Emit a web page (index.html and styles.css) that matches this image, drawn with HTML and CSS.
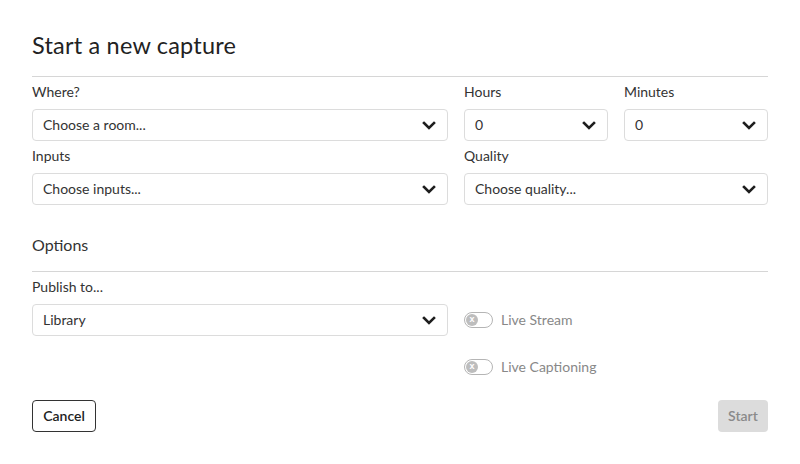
FILE: index.html
```html
<!DOCTYPE html>
<html>
<head>
<meta charset="utf-8">
<link rel="stylesheet" href="styles.css">
</head>
<body>
<div class="page">
  <h1 class="title">Start a new capture</h1>
  <div class="grid-top">
    <div class="field f-where">
      <label class="label">Where?</label>
      <div class="select"><span>Choose a room...</span><svg class="chev" viewBox="0 0 14 9"><path d="M2 2l5 5 5-5"/></svg></div>
    </div>
    <div class="field">
      <label class="label">Hours</label>
      <div class="select"><span>0</span><svg class="chev" viewBox="0 0 14 9"><path d="M2 2l5 5 5-5"/></svg></div>
    </div>
    <div class="field">
      <label class="label">Minutes</label>
      <div class="select"><span>0</span><svg class="chev" viewBox="0 0 14 9"><path d="M2 2l5 5 5-5"/></svg></div>
    </div>
    <div class="field f-where">
      <label class="label">Inputs</label>
      <div class="select"><span>Choose inputs...</span><svg class="chev" viewBox="0 0 14 9"><path d="M2 2l5 5 5-5"/></svg></div>
    </div>
    <div class="field f-quality">
      <label class="label">Quality</label>
      <div class="select"><span>Choose quality...</span><svg class="chev" viewBox="0 0 14 9"><path d="M2 2l5 5 5-5"/></svg></div>
    </div>
  </div>

  <h2 class="subtitle">Options</h2>
  <div class="grid-opts">
    <div class="field">
      <label class="label">Publish to...</label>
      <div class="select"><span>Library</span><svg class="chev" viewBox="0 0 14 9"><path d="M2 2l5 5 5-5"/></svg></div>
    </div>
    <div class="toggles">
      <div class="toggle-row"><span class="toggle"><span class="knob">x</span></span><span class="toggle-label">Live Stream</span></div>
      <div class="toggle-row"><span class="toggle"><span class="knob">x</span></span><span class="toggle-label">Live Captioning</span></div>
    </div>
  </div>

  <div class="actions">
    <button class="btn btn-cancel">Cancel</button>
    <button class="btn btn-start">Start</button>
  </div>
</div>
</body>
</html>
```

FILE: styles.css
```css
* { box-sizing: border-box; }
html, body { margin: 0; padding: 0; background: #fff; }
body {
  font-family: Lato, "Open Sans", "Liberation Sans", sans-serif;
  color: #333;
  font-size: 14px;
}
.page {
  width: 800px;
  padding: 30px 32px 0 32px;
}
.title {
  margin: 0;
  font-size: 23.5px;
  line-height: 30px;
  font-weight: 400;
  letter-spacing: 0.2px;
  color: #222;
  padding-bottom: 16px;
  border-bottom: 1px solid #d6d6d6;
}
.grid-top {
  display: grid;
  grid-template-columns: 416px 144px 144px;
  column-gap: 16px;
  row-gap: 5px;
  margin-top: 5px;
}
.f-quality { grid-column: 2 / 4; }
.field { display: flex; flex-direction: column; }
.label {
  display: block;
  line-height: 20px;
  margin-bottom: 7px;
  color: #333;
}
.select {
  height: 32px;
  border: 1px solid #dcdcdc;
  border-radius: 4px;
  display: flex;
  align-items: center;
  justify-content: space-between;
  padding: 0 11px 2px 10px;
  color: #333;
}
.chev {
  width: 14px;
  height: 9px;
  margin-top: 2px;
  fill: none;
  stroke: #1e1e1e;
  stroke-width: 2.6;
  stroke-linecap: square;
}
.subtitle {
  margin: 30px 0 0 0;
  font-size: 16px;
  line-height: 20px;
  font-weight: 400;
  color: #333;
  padding-bottom: 16px;
  border-bottom: 1px solid #d6d6d6;
}
.grid-opts {
  display: grid;
  grid-template-columns: 416px 1fr;
  column-gap: 16px;
  margin-top: 5px;
}
.toggles {
  padding-top: 27px;
  display: flex;
  flex-direction: column;
  gap: 15px;
}
.toggle-row {
  height: 32px;
  display: flex;
  align-items: center;
  gap: 8px;
  color: #888;
  padding-bottom: 2px;
}
.toggle {
  width: 29px;
  height: 16px;
  border: 1px solid #b5b5b5;
  border-radius: 8px;
  background: #fff;
  display: flex;
  align-items: center;
  padding-left: 1px;
  margin-top: 2px;
}
.knob {
  width: 12px;
  height: 12px;
  border-radius: 50%;
  background: #bdbdbd;
  color: #fff;
  font-size: 9px;
  font-weight: 700;
  line-height: 11px;
  text-align: center;
  font-family: "Liberation Sans", sans-serif;
}
.actions {
  display: flex;
  justify-content: space-between;
  margin-top: 17px;
}
.btn {
  height: 32px;
  border-radius: 4px;
  font-family: inherit;
  font-size: 14px;
  font-weight: 600;
  padding: 0 10px 1px;
  cursor: pointer;
}
.btn-cancel {
  background: #fff;
  border: 1px solid #333;
  color: #222;
  width: 64px;
}
.btn-start {
  background: #dcdcdc;
  border: none;
  color: #8a8a8a;
  width: 50px;
}
```
